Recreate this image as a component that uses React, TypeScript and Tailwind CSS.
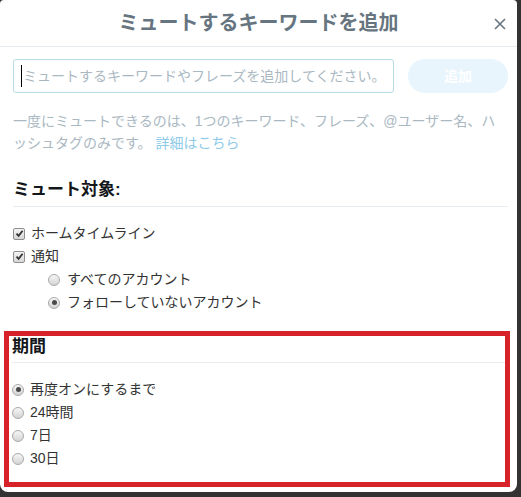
import React from 'react'

const FONT = { fontFamily: '"Liberation Sans", "Noto Sans CJK JP", sans-serif' }

function CheckBox() {
  return (
    <span className="flex h-[12px] w-[12px] items-center justify-center rounded-[2px] border border-[#8f8f8f] bg-gradient-to-b from-[#f4f4f4] to-[#d6d6d6]">
      <svg width="9" height="9" viewBox="0 0 9 9">
        <path d="M1.5 4.6 L3.6 6.8 L7.6 1.8" fill="none" stroke="#333" strokeWidth="1.8" />
      </svg>
    </span>
  )
}

function Radio({ checked }: { checked?: boolean }) {
  return (
    <span className="flex h-[12px] w-[12px] items-center justify-center rounded-full border border-[#a9a9a9] bg-gradient-to-b from-[#f6f6f6] to-[#d4d4d4]">
      {checked && <span className="h-[5px] w-[5px] rounded-full bg-[#4a4a4a]" />}
    </span>
  )
}

function CheckRow({ label }: { label: string }) {
  return (
    <div className="flex h-[23px] items-center gap-[6px] text-[14px] text-[#333]">
      <CheckBox />
      <span>{label}</span>
    </div>
  )
}

function RadioRow({ label, checked, indent }: { label: string; checked?: boolean; indent?: boolean }) {
  return (
    <div
      className={
        indent
          ? 'flex h-[23px] items-center gap-[7px] pl-[35px] text-[14px] text-[#333]'
          : 'flex h-[23px] items-center gap-[6px] text-[14px] text-[#333]'
      }
    >
      <Radio checked={checked} />
      <span>{label}</span>
    </div>
  )
}

export default function App() {
  return (
    <div className="h-[497px] w-[521px] overflow-hidden bg-[#333]" style={FONT}>
      <div className="flex h-[492px] w-[517px] flex-col rounded-b-[8px] rounded-t-[4px] bg-white">
        {/* Header */}
        <div className="relative flex h-[47px] shrink-0 items-center justify-center border-b border-[#e6ecf0]">
          <h1 className="text-[20px] font-bold text-[#66757f]">ミュートするキーワードを追加</h1>
          <svg
            className="absolute right-[11px] top-[18px]"
            width="12"
            height="12"
            viewBox="0 0 12 12"
          >
            <path d="M1 1 L11 11 M11 1 L1 11" stroke="#66757f" strokeWidth="1.6" />
          </svg>
        </div>

        <div className="flex flex-col pl-[13px] pr-[9px]">
          {/* Input row */}
          <div className="mt-[12px] flex items-center justify-between">
            <div className="flex h-[34px] w-[381px] items-center rounded-[3px] border border-[#b8dbe8] pl-[7px]">
              <span className="h-[22px] w-px bg-black" />
              <span className="ml-[1px] text-[14px] text-[#aab8c2]">
                ミュートするキーワードやフレーズを追加してください。
              </span>
            </div>
            <button className="flex h-[34px] w-[100px] items-center justify-center rounded-full bg-[#e8f5fd] text-[14px] font-bold text-white">
              追加
            </button>
          </div>

          {/* Help text */}
          <p className="mt-[17px] text-[14px] leading-[22px] text-[#aab8c2]">
            一度にミュートできるのは、1つのキーワード、フレーズ、@ユーザー名、ハ
            <br />
            ッシュタグのみです。 <span className="text-[#8ecbe8]">詳細はこちら</span>
          </p>

          {/* Mute target */}
          <div className="mt-[24px] border-b border-[#e6ecf0] pb-[4px]">
            <h2 className="text-[17px] font-bold leading-[24px] text-[#14171a]">ミュート対象:</h2>
          </div>
          <div className="mt-[15px] flex flex-col">
            <CheckRow label="ホームタイムライン" />
            <CheckRow label="通知" />
            <RadioRow indent label="すべてのアカウント" />
            <RadioRow indent checked label="フォローしていないアカウント" />
          </div>

          {/* Duration, highlighted */}
          <div className="ml-[-9px] mr-[-2px] mt-[17px] border-[5px] border-[#d8222a] pb-[12px] pl-[3px]">
            <div className="border-b border-[#e6ecf0] pb-[4px]">
              <h2 className="text-[17px] font-bold leading-[22px] text-[#14171a]">期間</h2>
            </div>
            <div className="mt-[15px] flex flex-col">
              <RadioRow checked label="再度オンにするまで" />
              <RadioRow label="24時間" />
              <RadioRow label="7日" />
              <RadioRow label="30日" />
            </div>
          </div>
        </div>
      </div>
    </div>
  )
}
